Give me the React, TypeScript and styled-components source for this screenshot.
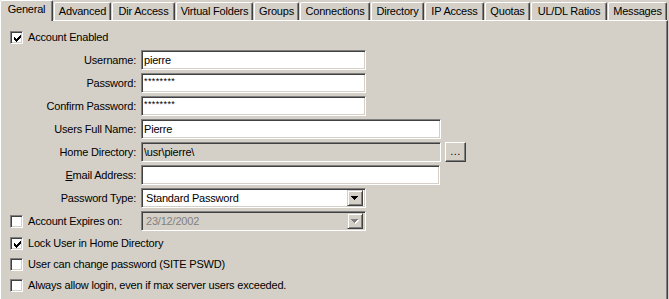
import styled, { createGlobalStyle, css } from 'styled-components';

const GlobalStyle = createGlobalStyle`
  html, body {
    margin: 0;
    padding: 0;
    background: #d4d0c8;
  }
  body {
    font-family: 'Liberation Sans', Arial, sans-serif;
    font-size: 11px;
    letter-spacing: -0.2px;
    color: #000;
  }
`;

// classic 3d borders
const sunken = css`
  box-sizing: border-box;
  border: 1px solid;
  border-color: #808080 #ffffff #ffffff #808080;
  box-shadow: inset 1px 1px 0 #404040, inset -1px -1px 0 #d4d0c8;
`;

const raised = css`
  box-sizing: border-box;
  border: 1px solid;
  border-color: #ffffff #404040 #404040 #ffffff;
  box-shadow: inset -1px -1px 0 #808080;
`;

const Window = styled.div`
  width: 669px;
  height: 299px;
  overflow: hidden;
  background: #d4d0c8;
`;

const TabRow = styled.div`
  display: flex;
  align-items: flex-end;
  height: 20px;
  position: relative;
  z-index: 1;
`;

const Tab = styled.div<{ $w: number; $active?: boolean }>`
  box-sizing: border-box;
  width: ${(p) => p.$w}px;
  height: ${(p) => (p.$active ? 21 : 18)}px;
  margin-right: 1px;
  margin-bottom: ${(p) => (p.$active ? -1 : 0)}px;
  padding-top: 2px;
  border-top: 1px solid #fff;
  border-left: 1px solid #fff;
  border-right: 1px solid #404040;
  border-radius: 2px 2px 0 0;
  box-shadow: inset -1px 0 0 #808080;
  background: #d4d0c8;
  display: flex;
  justify-content: center;
  align-items: flex-start;
  line-height: 13px;
  white-space: nowrap;
  position: relative;
  z-index: ${(p) => (p.$active ? 2 : 0)};
`;

const Panel = styled.div`
  box-sizing: border-box;
  width: 668px;
  height: 279px;
  border-top: 1px solid #fff;
  border-left: 1px solid #fff;
  border-right: 1px solid #404040;
  box-shadow: inset -1px 0 0 #808080;
  padding: 10px 0 0 9px;
  display: flex;
  flex-direction: column;
  align-items: flex-start;
`;

const CheckLine = styled.div<{ $mt?: number; $mb?: number }>`
  display: flex;
  align-items: center;
  height: 13px;
  margin-top: ${(p) => p.$mt || 0}px;
  margin-bottom: ${(p) => p.$mb || 0}px;
  line-height: 13px;
  white-space: nowrap;
`;

const Box = styled.span`
  ${sunken};
  display: inline-block;
  width: 13px;
  height: 13px;
  background: #fff;
  position: relative;
  flex: none;
  margin-right: 5px;

  svg {
    position: absolute;
    left: 2px;
    top: 2px;
  }
`;

const FieldGrid = styled.div`
  display: grid;
  grid-template-columns: 127px auto;
  grid-auto-rows: 20px;
  column-gap: 4px;
  row-gap: 3px;
  align-items: center;
`;

const Label = styled.div`
  text-align: right;
  white-space: nowrap;
  line-height: 13px;
  padding-right: 1px;
`;

const Accel = styled.span`
  text-decoration: underline;
`;

const TextBox = styled.input<{ $w: number; $grey?: boolean; $secret?: boolean }>`
  ${sunken};
  width: ${(p) => p.$w}px;
  height: 20px;
  margin: 0;
  padding: 0 0 0 2px;
  background: ${(p) => (p.$grey ? '#d4d0c8' : '#ffffff')};
  font-family: 'Liberation Sans', Arial, sans-serif;
  font-size: 11px;
  letter-spacing: -0.2px;
  color: #000;
  outline: none;
  ${(p) =>
    p.$secret &&
    css`
      font-size: 9px;
      letter-spacing: 0.4px;
      padding-bottom: 5px;
    `}
`;

const FieldLine = styled.div`
  display: flex;
  align-items: center;
  gap: 4px;
`;

const BrowseButton = styled.div`
  ${raised};
  width: 21px;
  height: 20px;
  background: #d4d0c8;
  display: flex;
  align-items: center;
  justify-content: center;
  padding-bottom: 3px;
  letter-spacing: 0.5px;
`;

const Combo = styled.div<{ $disabled?: boolean }>`
  ${sunken};
  width: 225px;
  height: 20px;
  padding: 2px;
  display: flex;
  align-items: center;
  background: ${(p) => (p.$disabled ? '#d4d0c8' : '#ffffff')};
  color: ${(p) => (p.$disabled ? '#808080' : '#000')};
`;

const ComboText = styled.div`
  flex: 1;
  padding-left: 2px;
  line-height: 13px;
`;

const DropButton = styled.div`
  box-sizing: border-box;
  width: 16px;
  height: 16px;
  border: 1px solid;
  border-color: #d4d0c8 #404040 #404040 #d4d0c8;
  box-shadow: inset 1px 1px 0 #fff, inset -1px -1px 0 #808080;
  background: #d4d0c8;
  display: flex;
  align-items: center;
  justify-content: center;
`;

const CHECK = ['......#', '.....##', '#...###', '##.###.', '#####..', '.###...', '..#....'];

function Tick() {
  return (
    <svg width="9" height="9" viewBox="0 0 9 9" shapeRendering="crispEdges">
      {CHECK.map((row, y) =>
        row.split('').map((c, x) =>
          c === '#' ? <rect key={`${x}-${y}`} x={x + 1} y={y + 1} width="1" height="1" fill="#000" /> : null
        )
      )}
    </svg>
  );
}

function CheckBox({ checked }: { checked?: boolean }) {
  return <Box>{checked && <Tick />}</Box>;
}

const ARROW = 'M0 0h7v1h-1v1h-1v1h-1v1h-1v-1h-1v-1h-1v-1h-1z';

function Arrow({ disabled }: { disabled?: boolean }) {
  return (
    <svg width="8" height="5" viewBox="0 0 8 5" shapeRendering="crispEdges">
      {disabled && <path d={ARROW} fill="#fff" transform="translate(1 1)" />}
      <path d={ARROW} fill={disabled ? '#808080' : '#000'} />
    </svg>
  );
}

function Select({ value, disabled }: { value: string; disabled?: boolean }) {
  return (
    <Combo $disabled={disabled}>
      <ComboText>{value}</ComboText>
      <DropButton>
        <Arrow disabled={disabled} />
      </DropButton>
    </Combo>
  );
}

const tabs: [string, number][] = [
  ['General', 53],
  ['Advanced', 57],
  ['Dir Access', 63],
  ['Virtual Folders', 77],
  ['Groups', 45],
  ['Connections', 70],
  ['Directory', 53],
  ['IP Access', 59],
  ['Quotas', 45],
  ['UL/DL Ratios', 76],
  ['Messages', 59],
];

export default function App() {
  return (
    <>
      <GlobalStyle />
      <Window>
        <TabRow>
          {tabs.map(([name, w], i) => (
            <Tab key={name} $w={w} $active={i === 0}>
              {name}
            </Tab>
          ))}
        </TabRow>
        <Panel>
          <CheckLine $mb={6}>
            <CheckBox checked />
            Account Enabled
          </CheckLine>

          <FieldGrid>
            <Label>Username:</Label>
            <TextBox $w={225} defaultValue="pierre" readOnly />

            <Label>Password:</Label>
            <TextBox $w={225} $secret defaultValue="********" readOnly />

            <Label>Confirm Password:</Label>
            <TextBox $w={225} $secret defaultValue="********" readOnly />

            <Label>Users Full Name:</Label>
            <TextBox $w={300} defaultValue="Pierre" readOnly />

            <Label>Home Directory:</Label>
            <FieldLine>
              <TextBox $w={300} $grey defaultValue="\usr\pierre\" readOnly />
              <BrowseButton>...</BrowseButton>
            </FieldLine>

            <Label>
              <Accel>E</Accel>mail Address:
            </Label>
            <TextBox $w={299} defaultValue="" readOnly />

            <Label>Password Type:</Label>
            <Select value="Standard Password" />

            <CheckLine>
              <CheckBox />
              Account Expires on:
            </CheckLine>
            <Select value="23/12/2002" disabled />
          </FieldGrid>

          <CheckLine $mt={6}>
            <CheckBox checked />
            Lock User in Home Directory
          </CheckLine>
          <CheckLine $mt={8}>
            <CheckBox />
            User can change password (SITE PSWD)
          </CheckLine>
          <CheckLine $mt={8}>
            <CheckBox />
            Always allow login, even if max server users exceeded.
          </CheckLine>
        </Panel>
      </Window>
    </>
  );
}
